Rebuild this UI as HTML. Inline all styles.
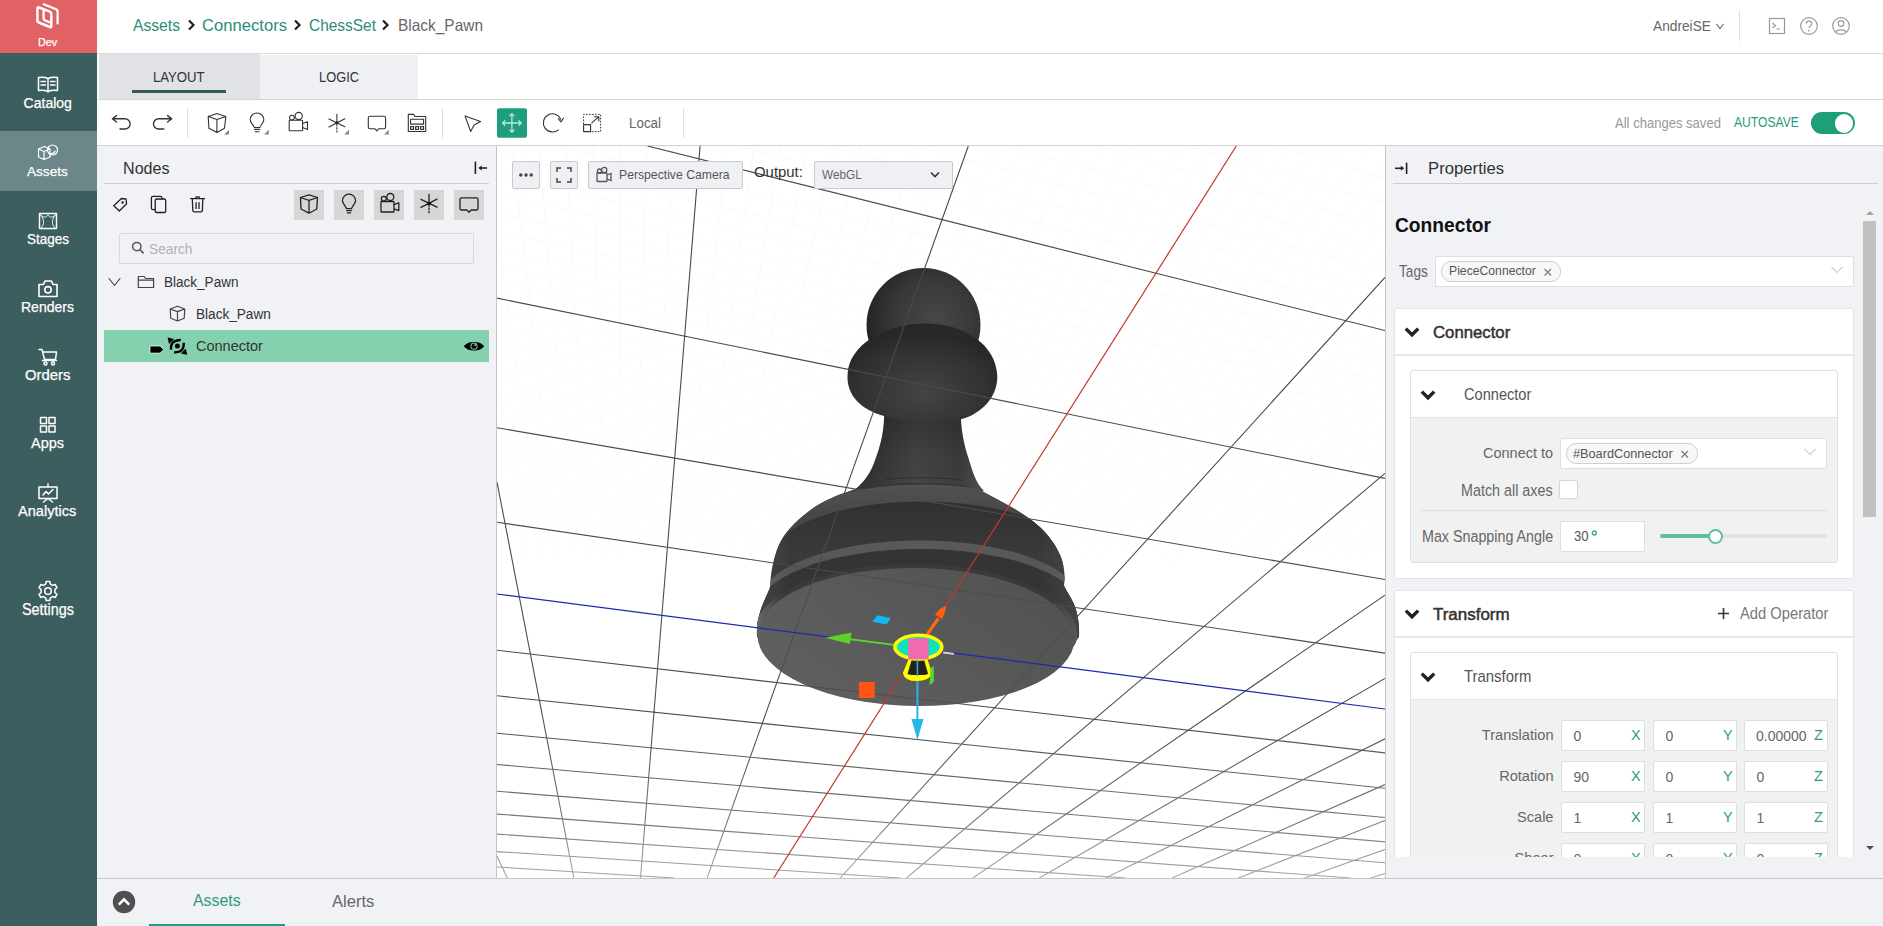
<!DOCTYPE html>
<html><head><meta charset="utf-8"><title>Editor</title>
<style>
*{box-sizing:border-box}
html,body{margin:0;padding:0}
body{width:1883px;height:926px;overflow:hidden;position:relative;background:#fff;font-family:"Liberation Sans",sans-serif;color:#333}
.a{position:absolute}
.t{position:absolute;white-space:nowrap;line-height:1}
svg{position:absolute;overflow:visible}
.sb{left:0;width:97px;text-align:center;color:#fff;font-size:14px}
.ic{fill:none;stroke:#333;stroke-width:1.3;stroke-linecap:round;stroke-linejoin:round}
.wi{fill:none;stroke:#fff;stroke-width:1.4;stroke-linecap:round;stroke-linejoin:round}
</style></head><body>
<div class="a" style="left:0;top:0;width:97px;height:926px;background:#3d5e5e"></div>
<div class="a" style="left:0;top:0;width:97px;height:53px;background:#e06264"></div>
<div class="a" style="left:0;top:131px;width:97px;height:60px;background:#6b8787"></div>
<!-- dev logo -->
<svg style="left:32px;top:0px" width="30" height="32" viewBox="32 0 30 32"><g fill="none" stroke="#fff" stroke-linejoin="round" stroke-linecap="round">
<path d="M37.4 8.6 Q37.4 6.9 39 7.5 L49.8 11.6 Q51.3 12.2 51.3 13.8 L51.3 26.2 Q51.3 27.6 49.9 27 L38.8 22.5 Q37.4 21.9 37.4 20.4 Z" stroke-width="2.5"/>
<path d="M43.6 9.6 L43.6 18.6 Q43.6 19.9 44.9 20.4 L51 22.8" stroke-width="2.3"/>
<path d="M43.6 4.3 L56.2 9.2 Q57.6 9.8 57.6 11.3 L57.6 23.6" stroke-width="2.2"/>
</g></svg>
<!-- catalog -->
<svg style="left:37px;top:76px" width="22" height="18" viewBox="0 0 22 18"><g class="wi" style="stroke-width:1.5">
<path d="M1.5 1.5 C4 1 8 1 11 2.5 C14 1 18 1 20.5 1.5 L20.5 14.5 C18 14 14 14 11 15.5 C8 14 4 14 1.5 14.5 Z"/>
<path d="M11 2.5 L11 16"/>
<path d="M4 5.5 L8.5 5.5 M4 9 L8.5 9 M13.5 5.5 L18 5.5 M13.5 9 L18 9"/>
</g></svg>
<!-- assets -->
<svg style="left:37px;top:144px" width="22" height="17" viewBox="0 0 22 17"><g class="wi" style="stroke-width:1.2">
<path d="M1.5 5 L7.5 2.5 L13 5 L13 13 L7 15.5 L1.5 13 Z M1.5 5 L7 7.5 L13 5 M7 7.5 L7 15.5"/>
<circle cx="15.5" cy="6" r="5"/>
<path d="M13.5 9.5 C15.5 9.8 17.5 8.5 18 7"/>
</g></svg>
<!-- stages -->
<svg style="left:38px;top:212px" width="20" height="18" viewBox="0 0 20 18"><g class="wi" style="stroke-width:1.5">
<rect x="1.5" y="1.5" width="17" height="15"/>
</g><g class="wi" style="stroke-width:0.9"><path d="M2.5 2.5 C4.5 6 8 6 10 3 C12 6 15.5 6 17.5 2.5 M2.8 3 C6.5 8 6.5 12 3.2 16 M17.2 3 C13.5 8 13.5 12 16.8 16"/></g></svg>
<!-- renders -->
<svg style="left:37px;top:279px" width="22" height="19" viewBox="0 0 22 19"><g class="wi" style="stroke-width:1.6">
<path d="M2 5.5 L6.5 5.5 L8 2 L14.5 2 L16 5.5 L20 5.5 L20 17.5 L2 17.5 Z"/>
<circle cx="11" cy="10.8" r="3.2"/>
</g></svg>
<!-- orders -->
<svg style="left:38px;top:348px" width="20" height="18" viewBox="0 0 20 18"><g class="wi" style="stroke-width:1.5">
<path d="M1 1.5 L4 1.5 L6.5 11.5 L17.5 11.5 L18.5 4 L5 4"/>
<path d="M4.5 12.5 L18.5 12.5"/>
<circle cx="7.5" cy="15.5" r="1.5"/><circle cx="15" cy="15.5" r="1.5"/>
</g></svg>
<!-- apps -->
<svg style="left:38px;top:416px" width="20" height="19" viewBox="0 0 20 19"><g class="wi" style="stroke-width:1.5">
<rect x="2.5" y="1.5" width="6" height="6"/><rect x="11" y="1.5" width="6" height="6"/>
<rect x="2.5" y="10" width="6" height="6"/><rect x="11" y="10" width="6" height="6"/>
</g></svg>
<!-- analytics -->
<svg style="left:37px;top:483px" width="22" height="21" viewBox="0 0 22 21"><g class="wi" style="stroke-width:1.5">
<path d="M11 1 L11 4"/><rect x="2" y="4" width="18" height="11.5"/>
<path d="M6 12 L9 8.5 L11.5 11 L16 6.5"/>
<path d="M11 15.5 L6.5 19 M11 15.5 L15.5 19"/>
</g></svg>
<!-- settings -->
<svg style="left:37px;top:580px" width="22" height="22" viewBox="0 0 22 22"><g class="wi" style="stroke-width:1.5">
<path d="M9.2 1.5 L12.8 1.5 L13.4 4.2 L15.6 5.4 L18.2 4.5 L20 7.6 L17.9 9.5 L17.9 12.5 L20 14.4 L18.2 17.5 L15.6 16.6 L13.4 17.8 L12.8 20.5 L9.2 20.5 L8.6 17.8 L6.4 16.6 L3.8 17.5 L2 14.4 L4.1 12.5 L4.1 9.5 L2 7.6 L3.8 4.5 L6.4 5.4 L8.6 4.2 Z"/>
<circle cx="11" cy="11" r="3.3"/>
</g></svg>
<!-- header breadcrumb -->
<svg style="left:187px;top:19px" width="9" height="12" viewBox="0 0 9 12"><path d="M2 1.5 L6.5 6 L2 10.5" fill="none" stroke="#222" stroke-width="2.2"/></svg>
<svg style="left:293px;top:19px" width="9" height="12" viewBox="0 0 9 12"><path d="M2 1.5 L6.5 6 L2 10.5" fill="none" stroke="#222" stroke-width="2.2"/></svg>
<svg style="left:381px;top:19px" width="9" height="12" viewBox="0 0 9 12"><path d="M2 1.5 L6.5 6 L2 10.5" fill="none" stroke="#222" stroke-width="2.2"/></svg>
<svg style="left:1715px;top:22px" width="10" height="9" viewBox="0 0 10 9"><path d="M1.5 2 L5 6.5 L8.5 2" fill="none" stroke="#666" stroke-width="1.1"/></svg>
<div class="a" style="left:1739px;top:11px;width:1px;height:30px;background:#ddd"></div>
<svg style="left:1767px;top:16px" width="20" height="20" viewBox="0 0 20 20"><g fill="none" stroke="#999" stroke-width="1.2"><rect x="2.5" y="2.5" width="15" height="15"/><path d="M5.5 7 L8.5 9.5 L5.5 12 M9.5 13 L13 13"/></g></svg>
<svg style="left:1799px;top:16px" width="20" height="20" viewBox="0 0 20 20"><g fill="none" stroke="#999" stroke-width="1.2"><circle cx="10" cy="10" r="8.3"/><path d="M7.3 7.6 C7.3 4.3 12.8 4.3 12.8 7.6 C12.8 9.6 10 9.8 10 12"/></g><circle cx="10" cy="14.6" r="0.9" fill="#999"/></svg>
<svg style="left:1831px;top:16px" width="20" height="20" viewBox="0 0 20 20"><g fill="none" stroke="#999" stroke-width="1.2"><circle cx="10" cy="10" r="8.3"/><circle cx="10" cy="7.5" r="2.8"/><path d="M4.5 16.2 C6 13 14 13 15.5 16.2"/></g></svg>
<!-- tabs -->
<div class="a" style="left:97px;top:53px;width:1786px;height:1px;background:#dcdcdc"></div>
<div class="a" style="left:99px;top:54px;width:161px;height:45px;background:#e1e2e5"></div>
<div class="a" style="left:260px;top:55px;width:158px;height:44px;background:#eff0f3"></div>
<div class="a" style="left:97px;top:99px;width:1786px;height:1px;background:#d6d6d6"></div>
<div class="a" style="left:132px;top:90px;width:94px;height:2.5px;background:#355a5a"></div>
<!-- toolbar -->
<div class="a" style="left:97px;top:145px;width:1786px;height:1px;background:#d0d0d0"></div>
<svg style="left:105px;top:105px" width="80" height="35" viewBox="105 105 80 35"><g class="ic" style="stroke-width:1.4">
<path d="M116.5 115.6 L112.4 118.8 L116.5 122 M112.6 118.8 L125 118.8 A5.1 5.1 0 0 1 125 129 L120 129"/>
<path d="M167.6 115.6 L171.7 118.8 L167.6 122 M171.5 118.8 L158.6 118.8 A5.1 5.1 0 0 0 158.6 129 L163.8 129"/>
</g></svg>
<div class="a" style="left:187px;top:108px;width:1px;height:30px;background:#ddd"></div>
<svg style="left:200px;top:105px" width="240" height="35" viewBox="200 105 240 35"><g class="ic" style="stroke-width:1.1">
<path d="M208.2 116.5 L216.9 113.6 L225.8 116.6 L216.9 119.5 Z M208.2 116.5 L208.9 128.3 L216.9 132.4 L224.5 128.3 L225.8 116.6 M216.9 119.5 L216.9 132.4"/>
<path d="M254.4 127.6 C252 123 250.2 122 250.2 119.8 A6.8 6.8 0 0 1 263.8 119.8 C263.8 122 262 123 259.8 127.6 Z M254.5 129.5 L259.7 129.5 M255.2 131.8 L259 131.8"/>
<rect x="289.2" y="120.3" width="13.4" height="10.5" rx="0.6"/><circle cx="291.9" cy="117.6" r="2.4"/><circle cx="298.7" cy="116" r="3.6"/>
<path d="M302.6 123.5 L307.5 121.7 L307.5 129.5 L302.6 127.6"/>
<path d="M336.9 114.2 L336.9 122.8 M328.9 119 L344.9 126.7 M344.9 118.7 L328.9 127"/>
<path d="M336.9 124.5 L336.9 132" stroke-dasharray="1.5 1.6"/>
<path d="M370 116.3 L384 116.3 Q385.6 116.3 385.6 118 L385.6 127 Q385.6 128.7 384 128.7 L379 128.7 L376.9 130.8 L374.8 128.7 L370 128.7 Q368.3 128.7 368.3 127 L368.3 118 Q368.3 116.3 370 116.3 Z"/>
<path d="M408.3 131.5 L408.3 114.4 L413.7 114.4 L415 116.5 L425.7 116.5 L425.7 131.5 Z"/>
<rect x="410.6" y="119.3" width="13" height="4.8"/><rect x="410.6" y="126.6" width="3" height="2.8"/><rect x="415.6" y="126.6" width="3" height="2.8"/><rect x="420.6" y="126.6" width="3" height="2.8"/>
</g>
<circle cx="336.9" cy="122.8" r="1.5" fill="#222"/>
<g fill="#888"><path d="M224.2 134.6 L229 134.6 L229 129.8 Z M264 134.6 L268.8 134.6 L268.8 129.8 Z M344.2 134.6 L349 134.6 L349 129.8 Z M384 134.6 L388.8 134.6 L388.8 129.8 Z"/></g>
</svg>
<div class="a" style="left:442px;top:108px;width:1px;height:30px;background:#ddd"></div>
<svg style="left:455px;top:105px" width="160" height="35" viewBox="455 105 160 35">
<path class="ic" style="stroke-width:1.1" d="M465 115.9 L480.5 121.6 L474.1 125 L470.7 131.5 Z"/>
<rect x="497" y="108.2" width="30" height="29.5" rx="2" fill="#1f9e7e"/>
<g fill="none" stroke="#b5ead7" stroke-width="1.3" stroke-linecap="round" stroke-linejoin="round">
<path d="M502.6 123 L521.2 123 M511.9 113.7 L511.9 132.3 M504.8 120.8 L502.6 123 L504.8 125.2 M519 120.8 L521.2 123 L519 125.2 M509.7 115.9 L511.9 113.7 L514.1 115.9 M509.7 130.1 L511.9 132.3 L514.1 130.1"/>
</g>
<g class="ic" style="stroke-width:1.1">
<path d="M560.8 119.2 A9.1 9.1 0 1 0 558.4 129.8"/>
<path d="M558.2 118.6 L561 121.8 L563.6 118"/>
<rect x="583.6" y="124.6" width="7" height="7"/>
<path d="M591.8 122.8 L598.6 116.9 M594.5 116.8 L598.8 116.8 L598.8 121"/>
</g>
<path d="M583.6 124 L583.6 114.4 L600.6 114.4 L600.6 131.6 L591 131.6" fill="none" stroke="#333" stroke-width="1" stroke-dasharray="1.6 1.4"/>
</svg>
<div class="a" style="left:683px;top:108px;width:1px;height:30px;background:#ddd"></div>
<div class="a" style="left:1811px;top:112px;width:44px;height:22px;border-radius:11px;background:#1f9e7a"></div>
<div class="a" style="left:1834.5px;top:114.2px;width:18.5px;height:18.5px;border-radius:50%;background:#fff"></div>
<!-- left panel -->
<div class="a" style="left:97px;top:146px;width:400px;height:732px;background:#f0f2f5"></div>
<div class="a" style="left:496px;top:146px;width:1px;height:732px;background:#c4c4c4"></div>
<svg style="left:470px;top:155px" width="25" height="25" viewBox="470 155 25 25"><g stroke="#222" fill="none"><path d="M475.4 161.6 L475.4 174" stroke-width="1.6"/><path d="M479.5 168 L487 168" stroke-width="1.6"/></g><path d="M478.4 168 L481.6 165.6 L481.6 170.4 Z" fill="#222"/></svg>
<div class="a" style="left:104px;top:183px;width:385px;height:1px;background:#cfcfcf"></div>
<svg style="left:105px;top:190px" width="110" height="30" viewBox="105 190 110 30"><g class="ic" style="stroke-width:1.3;stroke:#222">
<path d="M113.8 205.7 L121.4 198.5 L126 199 L126.6 203.7 L119.3 211 Z"/>
<circle cx="122.6" cy="202.4" r="0.6"/>
<path d="M162 199 L162 198 Q162 196.4 160.4 196.4 L153 196.4 Q151.4 196.4 151.4 198 L151.4 208 Q151.4 209.6 153 209.6 L155.2 209.6"/>
<rect x="155.2" y="199" width="10.5" height="13.5" rx="1.6"/>
<path d="M190.6 198.6 L204.6 198.6 M195.5 198.6 L196 196.8 L199 196.8 L199.6 198.6 M192.3 198.6 L192.8 210.4 Q192.9 211.9 194.4 211.9 L200.8 211.9 Q202.3 211.9 202.4 210.4 L202.8 198.6 M196.1 202.6 L196.1 208.4 M199 202.6 L199 208.4"/>
</g></svg>
<div class="a" style="left:294px;top:190px;width:30px;height:30px;background:#d6d6d6"></div>
<div class="a" style="left:334px;top:190px;width:30px;height:30px;background:#d6d6d6"></div>
<div class="a" style="left:374px;top:190px;width:30px;height:30px;background:#d6d6d6"></div>
<div class="a" style="left:414px;top:190px;width:30px;height:30px;background:#d6d6d6"></div>
<div class="a" style="left:454px;top:190px;width:30px;height:30px;background:#d6d6d6"></div>
<svg style="left:290px;top:186px" width="200" height="38" viewBox="290 186 200 38"><g class="ic" style="stroke-width:1.3;stroke:#222">
<path d="M300.5 197.5 L309 194.8 L317.5 197.5 L309 200.3 Z M300.5 197.5 L301 209 L309 213.2 L316.8 209 L317.5 197.5 M309 200.3 L309 213.2"/>
<path d="M346.6 208.6 C344.2 204 342.4 203 342.4 200.8 A6.6 6.6 0 0 1 355.6 200.8 C355.6 203 353.8 204 351.4 208.6 Z M346.7 210.6 L351.3 210.6 M347.4 212.8 L350.6 212.8"/>
<rect x="381" y="201.5" width="13" height="10.5" rx="0.6"/><circle cx="383.8" cy="198.8" r="2.4"/><circle cx="390.3" cy="197" r="3.5"/>
<path d="M394 204.6 L398.8 202.8 L398.8 210.6 L394 208.8"/>
<path d="M429 194.5 L429 203.2 M421 199.4 L437 207.2 M437 199.2 L421 207.4"/>
<path d="M429 205 L429 213" stroke-dasharray="1.5 1.6"/>
<path d="M461.6 197.8 L476.4 197.8 Q478 197.8 478 199.4 L478 208.4 Q478 210 476.4 210 L471.2 210 L469 212.2 L466.8 210 L461.6 210 Q460 210 460 208.4 L460 199.4 Q460 197.8 461.6 197.8 Z"/>
</g><circle cx="429" cy="203.2" r="1.5" fill="#111"/></svg>
<div class="a" style="left:119px;top:233px;width:355px;height:31px;border:1px solid #d9d9d9;border-radius:2px;background:#f0f2f5"></div>
<svg style="left:128px;top:238px" width="20" height="20" viewBox="128 238 20 20"><g fill="none" stroke="#555" stroke-width="1.5"><circle cx="136.8" cy="246.6" r="4.2"/><path d="M139.8 249.6 L143.6 253.4"/></g></svg>
<!-- tree -->
<svg style="left:105px;top:270px" width="90" height="90" viewBox="105 270 90 90"><g class="ic" style="stroke-width:1.2;stroke:#444">
<path d="M109 278.5 L114.5 285.5 L120 278.5"/>
<path d="M138.3 287.5 L138.3 276.5 L144.2 276.5 L145.6 278.5 L153.6 278.5 L153.6 287.5 Z M138.3 280.2 L153.6 280.2"/>
<path d="M170.2 309 L177.5 306.2 L184.8 309 L177.5 311.6 Z M170.2 309 L170.8 318.2 L177.5 321 L184.2 318.2 L184.8 309 M177.5 311.6 L177.5 321"/>
</g></svg>
<div class="a" style="left:104px;top:330px;width:385px;height:32px;background:#85d0ae"></div>
<svg style="left:145px;top:334px" width="50" height="25" viewBox="145 334 50 25">
<path d="M149.9 345.9 L160.1 345.9 L163.9 349.5 L160.1 353.2 L149.9 353.2 Z" fill="#000" stroke="#e8fff4" stroke-width="0.9"/>
<g fill="none" stroke="#000" stroke-width="2.4"><path d="M171 349.6 C170.6 344 172.5 340.2 180.8 340"/><path d="M174 352.4 C181.5 352.6 184 349 183.8 342.8"/></g>
<path d="M167.6 337.6 L174 339 L169 344 Z M187.2 354.8 L180.8 353.4 L185.8 348.4 Z" fill="#000"/>
<circle cx="177.4" cy="346.1" r="2.5" fill="#000"/>
</svg>
<svg style="left:460px;top:336px" width="28" height="20" viewBox="460 336 28 20">
<path d="M464 346.2 C467 340.5 481 340.5 484 346.2 C481 351.9 467 351.9 464 346.2 Z" fill="#000"/>
<circle cx="474" cy="346.2" r="3.6" fill="#85d0ae"/><circle cx="474" cy="346.2" r="2.6" fill="#000"/><circle cx="475.2" cy="345" r="0.9" fill="#85d0ae"/>
</svg>
<!-- viewport -->
<svg style="left:497px;top:146px;overflow:hidden" width="888" height="732" viewBox="497 146 888 732">
<defs>
<linearGradient id="lg" gradientUnits="userSpaceOnUse" x1="0" y1="146" x2="0" y2="878"><stop offset="0" stop-color="#464646"/><stop offset="0.78" stop-color="#4e4e4e"/><stop offset="0.92" stop-color="#777"/><stop offset="1" stop-color="#a8a8a8"/></linearGradient>
<linearGradient id="lgFine" gradientUnits="userSpaceOnUse" x1="0" y1="146" x2="0" y2="878"><stop offset="0" stop-color="#f9f9f9"/><stop offset="0.4" stop-color="#fbfbfb"/><stop offset="0.6" stop-color="#fff"/></linearGradient>
<linearGradient id="gNeckV" x1="0" y1="0" x2="0" y2="1"><stop offset="0" stop-color="#000" stop-opacity="0.25"/><stop offset="0.6" stop-color="#000" stop-opacity="0"/><stop offset="1" stop-color="#fff" stop-opacity="0.04"/></linearGradient>
<radialGradient id="gHead" cx="0.6" cy="0.45" r="0.6"><stop offset="0" stop-color="#474747"/><stop offset="0.6" stop-color="#383838"/><stop offset="1" stop-color="#242424"/></radialGradient>
<radialGradient id="gCollar" cx="0.5" cy="0.7" r="0.6"><stop offset="0" stop-color="#444"/><stop offset="0.7" stop-color="#323232"/><stop offset="1" stop-color="#282828"/></radialGradient>
<linearGradient id="gNeck" x1="0" y1="0" x2="1" y2="0"><stop offset="0" stop-color="#2a2a2a"/><stop offset="0.5" stop-color="#434343"/><stop offset="0.8" stop-color="#3a3a3a"/><stop offset="1" stop-color="#484848"/></linearGradient>
<linearGradient id="gBody" x1="0" y1="0" x2="1" y2="0"><stop offset="0" stop-color="#3a3a3a"/><stop offset="0.15" stop-color="#333"/><stop offset="0.5" stop-color="#383838"/><stop offset="0.85" stop-color="#333"/><stop offset="1" stop-color="#454545"/></linearGradient>
<linearGradient id="gFace" x1="0" y1="0.8" x2="1" y2="0.2"><stop offset="0" stop-color="#606060"/><stop offset="1" stop-color="#525252"/></linearGradient>
</defs>
<rect x="497" y="146" width="888" height="732" fill="#fff"/>
<path d="M1365.7 146.0L1385.0 151.9M1276.0 146.0L1385.0 178.6M1186.2 146.0L1385.0 203.8M1096.5 146.0L1385.0 227.6M1006.7 146.0L1385.0 250.3M917.0 146.0L1385.0 271.9M827.2 146.0L1385.0 292.4M497.0 870.8L500.6 878.0M737.4 146.0L1385.0 311.9M497.0 839.8L513.9 878.0M557.7 146.0L1385.0 348.3M497.0 821.1L520.6 878.0M497.0 153.0L1385.0 365.3M497.0 799.9L527.3 878.0M497.0 173.9L1385.0 381.6M497.0 775.3L533.9 878.0M497.0 193.8L1385.0 397.2M497.0 746.8L540.6 878.0M497.0 213.0L1385.0 412.1M497.0 713.0L547.3 878.0M497.0 231.4L1385.0 426.4M497.0 672.5L553.9 878.0M497.0 249.1L1385.0 440.2M497.0 623.0L560.6 878.0M497.0 266.0L1385.0 453.4M497.0 561.3L567.3 878.0M497.0 282.3L1385.0 466.1M497.0 376.6L580.6 878.0M497.0 313.2L1385.0 490.2M497.0 229.3L587.2 878.0M497.0 327.8L1385.0 501.5M512.3 146.0L593.9 878.0M497.0 341.8L1385.0 512.5M539.1 146.0L600.6 878.0M497.0 355.4L1385.0 523.1M565.9 146.0L607.2 878.0M497.0 368.5L1385.0 533.3M592.8 146.0L613.9 878.0M497.0 381.2L1385.0 543.2M619.6 146.0L620.6 878.0M497.0 393.4L1385.0 552.7M646.4 146.0L627.2 878.0M497.0 405.3L1385.0 561.9M673.3 146.0L633.9 878.0M497.0 416.7L1385.0 570.9M726.9 146.0L647.2 878.0M497.0 438.6L1385.0 587.9M753.8 146.0L653.9 878.0M497.0 449.0L1385.0 596.0M780.6 146.0L660.5 878.0M497.0 459.1L1385.0 603.9M807.4 146.0L667.2 878.0M497.0 469.0L1385.0 611.6M834.2 146.0L673.8 878.0M497.0 478.5L1385.0 619.0M861.0 146.0L680.5 878.0M497.0 487.7L1385.0 626.2M887.9 146.0L687.1 878.0M497.0 496.7L1385.0 633.2M914.7 146.0L693.8 878.0M497.0 505.5L1385.0 640.0M941.5 146.0L700.5 878.0M497.0 514.0L1385.0 646.6M995.1 146.0L713.8 878.0M497.0 530.3L1385.0 659.4M1021.9 146.0L720.4 878.0M497.0 538.1L1385.0 665.5M1048.7 146.0L727.1 878.0M497.0 545.7L1385.0 671.4M1075.5 146.0L733.7 878.0M497.0 553.1L1385.0 677.2M1102.3 146.0L740.4 878.0M497.0 560.4L1385.0 682.8M1129.2 146.0L747.0 878.0M497.0 567.4L1385.0 688.3M1156.0 146.0L753.7 878.0M497.0 574.3L1385.0 693.7M1182.8 146.0L760.4 878.0M497.0 581.0L1385.0 698.9M1209.6 146.0L767.0 878.0M497.0 587.6L1385.0 704.0M1263.1 146.0L780.3 878.0M497.0 600.2L1385.0 713.8M1289.9 146.0L787.0 878.0M497.0 606.3L1385.0 718.6M1316.7 146.0L793.6 878.0M497.0 612.2L1385.0 723.2M1343.5 146.0L800.3 878.0M497.0 618.0L1385.0 727.8M1370.3 146.0L806.9 878.0M497.0 623.7L1385.0 732.2M1385.0 161.2L813.6 878.0M497.0 629.3L1385.0 736.5M1385.0 193.1L820.2 878.0M497.0 634.7L1385.0 740.8M1385.0 223.0L826.9 878.0M497.0 640.0L1385.0 744.9M1385.0 251.1L833.5 878.0M497.0 645.2L1385.0 748.9M1385.0 302.2L846.8 878.0M497.0 655.3L1385.0 756.8M1385.0 325.6L853.4 878.0M497.0 660.2L1385.0 760.6M1385.0 347.6L860.1 878.0M497.0 664.9L1385.0 764.3M1385.0 368.5L866.7 878.0M497.0 669.6L1385.0 767.9M1385.0 388.3L873.4 878.0M497.0 674.2L1385.0 771.5M1385.0 407.0L880.0 878.0M497.0 678.7L1385.0 775.0M1385.0 424.8L886.7 878.0M497.0 683.1L1385.0 778.4M1385.0 441.8L893.3 878.0M497.0 687.4L1385.0 781.8M1385.0 457.9L900.0 878.0M497.0 691.6L1385.0 785.1M1385.0 488.0L913.2 878.0M497.0 699.8L1385.0 791.5M1385.0 502.0L919.9 878.0M497.0 703.8L1385.0 794.6M1385.0 515.5L926.5 878.0M497.0 707.7L1385.0 797.7M1385.0 528.3L933.2 878.0M497.0 711.6L1385.0 800.6M1385.0 540.6L939.8 878.0M497.0 715.3L1385.0 803.6M1385.0 552.4L946.5 878.0M497.0 719.0L1385.0 806.5M1385.0 563.8L953.1 878.0M497.0 722.7L1385.0 809.3M1385.0 574.7L959.7 878.0M497.0 726.2L1385.0 812.1M1385.0 585.1L966.4 878.0M497.0 729.7L1385.0 814.8M1385.0 604.9L979.7 878.0M497.0 736.6L1385.0 820.1M1385.0 614.3L986.3 878.0M497.0 739.9L1385.0 822.7M1385.0 623.3L992.9 878.0M497.0 743.2L1385.0 825.3M1385.0 632.0L999.6 878.0M497.0 746.4L1385.0 827.8M1385.0 640.4L1006.2 878.0M497.0 749.5L1385.0 830.2M1385.0 648.5L1012.8 878.0M497.0 752.6L1385.0 832.6M1385.0 656.4L1019.5 878.0M497.0 755.7L1385.0 835.0M1385.0 663.9L1026.1 878.0M497.0 758.7L1385.0 837.4M1385.0 671.3L1032.8 878.0M497.0 761.6L1385.0 839.7M1385.0 685.3L1046.0 878.0M497.0 767.4L1385.0 844.2M1385.0 692.0L1052.7 878.0M497.0 770.2L1385.0 846.3M1385.0 698.4L1059.3 878.0M497.0 773.0L1385.0 848.5M1385.0 704.7L1065.9 878.0M497.0 775.7L1385.0 850.6M1385.0 710.8L1072.6 878.0M497.0 778.4L1385.0 852.7M1385.0 716.7L1079.2 878.0M497.0 781.0L1385.0 854.8M1385.0 722.5L1085.8 878.0M497.0 783.6L1385.0 856.8M1385.0 728.1L1092.5 878.0M497.0 786.2L1385.0 858.8M1385.0 733.5L1099.1 878.0M497.0 788.7L1385.0 860.8M1385.0 743.9L1112.4 878.0M497.0 793.6L1385.0 864.6M1385.0 748.9L1119.0 878.0M497.0 796.0L1385.0 866.5M1385.0 753.8L1125.6 878.0M497.0 798.4L1385.0 868.3M1385.0 758.5L1132.2 878.0M497.0 800.8L1385.0 870.2M1385.0 763.2L1138.9 878.0M497.0 803.1L1385.0 872.0M1385.0 767.7L1145.5 878.0M497.0 805.3L1385.0 873.7M1385.0 772.0L1152.1 878.0M497.0 807.6L1385.0 875.5M1385.0 776.3L1158.8 878.0M497.0 809.8L1385.0 877.2M1385.0 780.5L1165.4 878.0M497.0 812.0L1373.1 878.0M1385.0 788.6L1178.6 878.0M497.0 816.2L1328.1 878.0M1385.0 792.5L1185.3 878.0M497.0 818.3L1305.7 878.0M1385.0 796.3L1191.9 878.0M497.0 820.4L1283.2 878.0M1385.0 800.0L1198.5 878.0M497.0 822.4L1260.7 878.0M1385.0 803.6L1205.1 878.0M497.0 824.4L1238.2 878.0M1385.0 807.1L1211.8 878.0M497.0 826.4L1215.8 878.0M1385.0 810.6L1218.4 878.0M497.0 828.4L1193.3 878.0M1385.0 814.0L1225.0 878.0M497.0 830.3L1170.8 878.0M1385.0 817.3L1231.6 878.0M497.0 832.2L1148.3 878.0M1385.0 823.7L1244.9 878.0M497.0 835.9L1103.3 878.0M1385.0 826.8L1251.5 878.0M497.0 837.7L1080.7 878.0M1385.0 829.9L1258.1 878.0M497.0 839.5L1058.2 878.0M1385.0 832.9L1264.7 878.0M497.0 841.3L1035.7 878.0M1385.0 835.8L1271.4 878.0M497.0 843.1L1013.2 878.0M1385.0 838.6L1278.0 878.0M497.0 844.8L990.6 878.0M1385.0 841.4L1284.6 878.0M497.0 846.5L968.1 878.0M1385.0 844.2L1291.2 878.0M497.0 848.2L945.5 878.0M1385.0 846.9L1297.8 878.0M497.0 849.9L923.0 878.0M1385.0 852.1L1311.1 878.0M497.0 853.2L877.9 878.0M1385.0 854.7L1317.7 878.0M497.0 854.8L855.3 878.0M1385.0 857.1L1324.3 878.0M497.0 856.4L832.7 878.0M1385.0 859.6L1330.9 878.0M497.0 858.0L810.2 878.0M1385.0 862.0L1337.6 878.0M497.0 859.5L787.6 878.0M1385.0 864.4L1344.2 878.0M497.0 861.1L765.0 878.0M1385.0 866.7L1350.8 878.0M497.0 862.6L742.4 878.0M1385.0 868.9L1357.4 878.0M497.0 864.1L719.8 878.0M1385.0 871.2L1364.0 878.0M497.0 865.6L697.2 878.0M1385.0 875.5L1377.2 878.0M497.0 868.5L652.0 878.0M1385.0 877.6L1383.9 878.0M497.0 869.9L629.4 878.0M497.0 871.3L606.8 878.0M497.0 872.7L584.2 878.0M497.0 874.1L561.6 878.0M497.0 875.5L538.9 878.0M497.0 876.9L516.3 878.0" fill="none" stroke="url(#lgFine)" stroke-width="1"/>
<!-- pawn -->
<defs>
<clipPath id="cpBody"><path d="M858.5 488 C840 494 821 501 808 512 C795 522 785 532 779 545 C774 556 771 570 770.5 582 L769.8 588.6 C767 595 762 605 759.4 614.5 C757 622 756.5 630 757 637 L770 650 L920 670 L1066 655 L1079 637 C1079.5 628 1078.5 618 1076 610 C1074 602 1068 594 1063.7 585.3 C1065.5 578 1064.5 566 1060.5 556 C1055 543 1045 530 1030 519 C1015 508 998 500 979.4 489.7 C960 481 890 481 858.5 488 Z"/></clipPath>
<linearGradient id="gEdge" x1="0" y1="0" x2="1" y2="0"><stop offset="0" stop-color="#fff" stop-opacity="0.10"/><stop offset="0.12" stop-color="#fff" stop-opacity="0"/><stop offset="0.85" stop-color="#fff" stop-opacity="0"/><stop offset="1" stop-color="#fff" stop-opacity="0.10"/></linearGradient>
<linearGradient id="gRidge1" x1="0" y1="0" x2="0" y2="1"><stop offset="0" stop-color="#525252"/><stop offset="0.3" stop-color="#474747"/><stop offset="1" stop-color="#3c3c3c"/></linearGradient>
<linearGradient id="gDark1" x1="0" y1="0" x2="0" y2="1"><stop offset="0" stop-color="#303030"/><stop offset="0.5" stop-color="#3a3a3a"/><stop offset="1" stop-color="#353535"/></linearGradient>
<linearGradient id="gRidge2" x1="0" y1="0" x2="0" y2="1"><stop offset="0" stop-color="#5a5a5a"/><stop offset="1" stop-color="#474747"/></linearGradient>
<linearGradient id="gRim" x1="0" y1="0" x2="1" y2="0"><stop offset="0" stop-color="#6e6e6e"/><stop offset="0.08" stop-color="#3a3a3a"/><stop offset="0.92" stop-color="#3a3a3a"/><stop offset="1" stop-color="#5a5a5a"/></linearGradient>
</defs>
<g>
<circle cx="923.5" cy="325" r="57" fill="url(#gHead)"/>
<path d="M884 408 C885 428 881 445 874 463 C869 476 862 484 852 492 L984 491 C977 484 974 476 970 463 C964 445 960 428 961 408 Z" fill="url(#gNeck)"/>
<path d="M884 408 C885 428 881 445 874 463 C869 476 862 484 852 492 L984 491 C977 484 974 476 970 463 C964 445 960 428 961 408 Z" fill="url(#gNeckV)"/>
<path d="M847.6 374 C849 345 885 323.5 924.7 323.5 C965 323.5 996 345 997.3 375.4 C998 398 980 414 962 419 C940 424 905 423 884 416 C862 410 846 396 847.6 374 Z" fill="url(#gCollar)"/>
<g clip-path="url(#cpBody)">
<rect x="750" y="470" width="340" height="250" fill="#353535"/>
<ellipse cx="922" cy="537" rx="142" ry="52.5" fill="url(#gRidge1)"/>
<ellipse cx="922" cy="554" rx="146" ry="52.5" fill="url(#gDark1)"/>
<ellipse cx="920" cy="604" rx="162" ry="63.5" fill="url(#gRidge2)"/>
<ellipse cx="920" cy="613.5" rx="165" ry="64.5" fill="#343434"/>
<rect x="750" y="470" width="340" height="250" fill="url(#gEdge)"/>
</g>
<path d="M884 480 C900 477 945 477 962 480" fill="none" stroke="#2e2e2e" stroke-width="1.2"/>
<ellipse cx="916" cy="633" rx="161" ry="69" transform="rotate(0.8 916 637)" fill="url(#gRim)" clip-path="url(#cpBody)"/>
<ellipse cx="916" cy="637" rx="158.5" ry="69" transform="rotate(0.8 916 637)" fill="url(#gFace)"/>
</g>
<!-- grid -->
<path d="M497.0 856.2L507.3 878.0M497.0 482.0L573.9 878.0M700.1 146.0L640.5 878.0M968.3 146.0L707.1 878.0M1385.0 277.4L840.2 878.0M1385.0 473.3L906.6 878.0M1385.0 595.2L973.0 878.0M1385.0 678.4L1039.4 878.0M1385.0 738.8L1105.7 878.0M1385.0 784.6L1172.0 878.0M1385.0 820.5L1238.3 878.0M1385.0 849.5L1304.5 878.0M1385.0 873.4L1370.6 878.0M647.5 146.0L1385.0 330.5M497.0 298.1L1385.0 478.4M497.0 427.8L1385.0 579.5M497.0 522.2L1385.0 653.1M497.0 650.3L1385.0 752.9M497.0 695.8L1385.0 788.3M497.0 733.2L1385.0 817.5M497.0 764.5L1385.0 841.9M497.0 791.2L1385.0 862.7M497.0 814.1L1350.6 878.0M497.0 834.1L1125.8 878.0M497.0 851.6L900.4 878.0M497.0 867.0L674.6 878.0" fill="none" stroke="url(#lg)" stroke-width="1.1"/>
<path d="M1236.3 146.0L773.7 878.0" fill="none" stroke="#c0392b" stroke-width="1.2"/>
<path d="M497.0 594.0L1385.0 709.0" fill="none" stroke="#1e28b4" stroke-width="1.2"/>
<!-- gizmo -->
<g>
<path d="M910 647 L848 639" stroke="#5fd22a" stroke-width="2"/>
<path d="M825.3 637.7 L851.5 632.5 L850 644 Z" fill="#5fd22a"/>
<path d="M924.7 637.9 L938.3 618.5" stroke="#ff6a13" stroke-width="3.2"/>
<path d="M934.9 614.6 L940.3 608.7 L946.5 605.5 L944.6 613.6 L942.2 619 Z" fill="#ff5e0e"/>
<path d="M917.4 660 L917.4 722" stroke="#22b8ee" stroke-width="2"/>
<path d="M911.5 719 L923.5 719 L917.4 740 Z" fill="#22b8ee"/>
<path d="M943.2 652.5 L954 653.9" stroke="#d8d8d8" stroke-width="1.8"/>
<path d="M877.4 615.2 L890.8 617.9 L886.5 624.5 L872.2 621.8 Z" fill="#14b8f0"/>
<rect x="859" y="682" width="15.8" height="16" fill="#ff5511"/>
<path d="M911 658.5 L925 658.5 L930 673 C928 678 922 679 917 679 C912 679 906 678 905 673 Z" fill="#ffff00" stroke="#ffff00" stroke-width="4" stroke-linejoin="round"/>
<path d="M911.6 660.3 L924.2 660.3 L928.1 673.9 C925 675.5 910 675.5 907.5 673.9 Z" fill="#222"/>
<ellipse cx="918.4" cy="647.1" rx="23.4" ry="11.8" fill="#0fe3bb" stroke="#ffff00" stroke-width="3.6"/>
<rect x="908.2" y="638.4" width="20.4" height="21" fill="#f06ab2"/>
<path d="M917.4 660 L917.4 676" stroke="#3aa6cc" stroke-width="1.6"/>
<path d="M930.5 668 L933.9 666 L933.9 681.6 L929.6 685.5 Z" fill="#5fd22a"/>
</g>
</svg>
<!-- overlay buttons -->
<div class="a" style="left:512px;top:161px;width:28px;height:27.5px;border:1px solid #c9cacc;border-radius:2px;background:#eff0f3"></div>
<svg style="left:512px;top:161px" width="28" height="28" viewBox="0 0 28 28"><g fill="#444"><circle cx="8.8" cy="14" r="1.7"/><circle cx="14" cy="14" r="1.7"/><circle cx="19.2" cy="14" r="1.7"/></g></svg>
<div class="a" style="left:550px;top:161px;width:28px;height:27.5px;border:1px solid #c9cacc;border-radius:2px;background:#eff0f3"></div>
<svg style="left:550px;top:161px" width="28" height="28" viewBox="0 0 28 28"><path d="M7 11 L7 7 L11 7 M17 7 L21 7 L21 11 M21 17 L21 21 L17 21 M11 21 L7 21 L7 17" fill="none" stroke="#444" stroke-width="1.5"/></svg>
<div class="a" style="left:588px;top:161px;width:155px;height:27.5px;border:1px solid #c9cacc;border-radius:2px;background:#eff0f3"></div>
<svg style="left:594px;top:166px" width="20" height="18" viewBox="0 0 20 18"><g fill="none" stroke="#555" stroke-width="1.3"><rect x="3" y="7" width="10" height="8.5" rx="0.5"/><circle cx="5.4" cy="5" r="2"/><circle cx="10.2" cy="4" r="2.6"/><path d="M13 9 L17 7.5 L17 14.5 L13 13"/></g></svg>
<div class="a" style="left:813.5px;top:161px;width:139.5px;height:27.5px;border:1px solid #c9cacc;border-radius:2px;background:#eff0f3"></div>
<svg style="left:928px;top:169px" width="14" height="12" viewBox="0 0 14 12"><path d="M3 3.5 L7 7.5 L11 3.5" fill="none" stroke="#333" stroke-width="1.6"/></svg>
<!-- right panel -->
<div class="a" style="left:1385px;top:146px;width:498px;height:732px;background:#f0f2f5"></div>
<div class="a" style="left:1385px;top:146px;width:1px;height:732px;background:#c4c4c4"></div>
<svg style="left:1390px;top:158px" width="22" height="20" viewBox="1390 158 22 20"><g stroke="#222" fill="none" stroke-width="1.6"><path d="M1406.6 162.6 L1406.6 174"/><path d="M1395 168.3 L1401.5 168.3"/></g><path d="M1404.2 168.3 L1400.8 165.8 L1400.8 170.8 Z" fill="#222"/></svg>
<div class="a" style="left:1393px;top:183px;width:485px;height:1px;background:#cfcfcf"></div>
<!-- scroll content -->
<div class="a" style="left:1386px;top:190px;width:497px;height:667px;overflow:hidden">
<div class="a" style="left:-1386px;top:-190px;width:1883px;height:1100px">
<div class="a" style="left:1435px;top:255.5px;width:419px;height:31px;background:#fff;border:1px solid #dedede;border-radius:2px"></div>
<div class="a" style="left:1440.5px;top:260.8px;width:120px;height:21px;background:#f7f7f7;border:1px solid #cfcfcf;border-radius:10px"></div>
<svg style="left:1542px;top:266px" width="12" height="12" viewBox="0 0 12 12"><path d="M2.5 3 L9 9.5 M9 3 L2.5 9.5" stroke="#777" stroke-width="1.1"/></svg>
<svg style="left:1829px;top:264px" width="16" height="12" viewBox="0 0 16 12"><path d="M2.5 3 L8 8.5 L13.5 3" fill="none" stroke="#d0d0d0" stroke-width="1.1"/></svg>
<!-- connector card -->
<div class="a" style="left:1394px;top:307.5px;width:459.5px;height:271px;background:#fff;border:1px solid #e2e3e5;border-radius:3px"></div>
<div class="a" style="left:1395px;top:354px;width:457.5px;height:2px;background:#e6e7e9"></div>
<svg style="left:1402px;top:324px" width="20" height="16" viewBox="0 0 20 16"><path d="M3.8 4.6 L10 10.8 L16.2 4.6" fill="none" stroke="#222" stroke-width="3.4"/></svg>
<div class="a" style="left:1409.5px;top:370px;width:428.5px;height:192.5px;background:#f0f1f1;border:1px solid #e0e1e3;border-radius:3px"></div>
<div class="a" style="left:1410.5px;top:371px;width:426.5px;height:46.5px;background:#fff;border-bottom:1px solid #e3e4e6;border-radius:3px 3px 0 0"></div>
<svg style="left:1418px;top:387px" width="20" height="16" viewBox="0 0 20 16"><path d="M3.8 4.6 L10 10.8 L16.2 4.6" fill="none" stroke="#222" stroke-width="3.4"/></svg>
<div class="a" style="left:1560px;top:437.5px;width:267px;height:31px;background:#fff;border:1px solid #dedede;border-radius:2px"></div>
<div class="a" style="left:1565.5px;top:442.5px;width:132px;height:21px;background:#f7f7f7;border:1px solid #cfcfcf;border-radius:10px"></div>
<svg style="left:1679px;top:448px" width="12" height="12" viewBox="0 0 12 12"><path d="M2.5 3 L9 9.5 M9 3 L2.5 9.5" stroke="#777" stroke-width="1.1"/></svg>
<svg style="left:1802px;top:446px" width="16" height="12" viewBox="0 0 16 12"><path d="M2.5 3 L8 8.5 L13.5 3" fill="none" stroke="#d0d0d0" stroke-width="1.1"/></svg>
<div class="a" style="left:1558.5px;top:479.5px;width:19.5px;height:19.5px;background:#fff;border:1px solid #d5d5d5;border-radius:2px"></div>
<div class="a" style="left:1420px;top:510px;width:407px;height:1px;background:#dedede"></div>
<div class="a" style="left:1560px;top:520.5px;width:84.5px;height:31px;background:#fff;border:1px solid #dedede;border-radius:2px"></div>
<svg style="left:1589px;top:529px" width="10" height="10" viewBox="0 0 10 10"><circle cx="5.3" cy="4" r="2" fill="none" stroke="#35a88a" stroke-width="1.3"/></svg>
<div class="a" style="left:1659.5px;top:534px;width:167.5px;height:4px;background:#e2e2e2;border-radius:2px"></div>
<div class="a" style="left:1659.5px;top:534px;width:56px;height:4px;background:#5fbf9d;border-radius:2px"></div>
<div class="a" style="left:1707.5px;top:528.5px;width:15px;height:15px;background:#fff;border:2px solid #5fbf9d;border-radius:50%"></div>
<!-- transform card -->
<div class="a" style="left:1394px;top:589.5px;width:459.5px;height:400px;background:#fff;border:1px solid #e2e3e5;border-radius:3px"></div>
<div class="a" style="left:1395px;top:636px;width:457.5px;height:2px;background:#e6e7e9"></div>
<svg style="left:1402px;top:606px" width="20" height="16" viewBox="0 0 20 16"><path d="M3.8 4.6 L10 10.8 L16.2 4.6" fill="none" stroke="#222" stroke-width="3.4"/></svg>
<svg style="left:1716px;top:606px" width="15" height="15" viewBox="0 0 15 15"><path d="M7.5 2 L7.5 13 M2 7.5 L13 7.5" stroke="#333" stroke-width="1.6"/></svg>
<div class="a" style="left:1409.5px;top:652px;width:428px;height:400px;background:#f0f1f1;border:1px solid #e0e1e3;border-radius:3px"></div>
<div class="a" style="left:1410.5px;top:653px;width:426px;height:46.5px;background:#fff;border-bottom:1px solid #e3e4e6;border-radius:3px 3px 0 0"></div>
<svg style="left:1418px;top:669px" width="20" height="16" viewBox="0 0 20 16"><path d="M3.8 4.6 L10 10.8 L16.2 4.6" fill="none" stroke="#222" stroke-width="3.4"/></svg>
<div class="t" style="right:329.5px;top:727.5px;font-size:14.6px;color:#666">Translation</div>
<div class="a" style="left:1560.5px;top:719.5px;width:84px;height:31px;background:#fff;border:1px solid #dedede;border-radius:2px"></div>
<div class="t" style="left:1573.5px;top:728.5px;font-size:14px;color:#666">0</div>
<div class="t" style="left:1631.0px;top:728.0px;font-size:14.5px;color:#2e9a7c">X</div>
<div class="a" style="left:1652.5px;top:719.5px;width:84px;height:31px;background:#fff;border:1px solid #dedede;border-radius:2px"></div>
<div class="t" style="left:1665.5px;top:728.5px;font-size:14px;color:#666">0</div>
<div class="t" style="left:1723.0px;top:728.0px;font-size:14.5px;color:#2e9a7c">Y</div>
<div class="a" style="left:1743.5px;top:719.5px;width:84px;height:31px;background:#fff;border:1px solid #dedede;border-radius:2px"></div>
<div class="t" style="left:1756.0px;top:728.5px;font-size:14px;color:#666">0.00000</div>
<div class="t" style="left:1814.0px;top:728.0px;font-size:14.5px;color:#2e9a7c">Z</div>
<div class="t" style="right:329.5px;top:768.5px;font-size:14.6px;color:#666">Rotation</div>
<div class="a" style="left:1560.5px;top:760.5px;width:84px;height:31px;background:#fff;border:1px solid #dedede;border-radius:2px"></div>
<div class="t" style="left:1573.5px;top:769.5px;font-size:14px;color:#666">90</div>
<div class="t" style="left:1631.0px;top:769.0px;font-size:14.5px;color:#2e9a7c">X</div>
<div class="a" style="left:1652.5px;top:760.5px;width:84px;height:31px;background:#fff;border:1px solid #dedede;border-radius:2px"></div>
<div class="t" style="left:1665.5px;top:769.5px;font-size:14px;color:#666">0</div>
<div class="t" style="left:1723.0px;top:769.0px;font-size:14.5px;color:#2e9a7c">Y</div>
<div class="a" style="left:1743.5px;top:760.5px;width:84px;height:31px;background:#fff;border:1px solid #dedede;border-radius:2px"></div>
<div class="t" style="left:1756.5px;top:769.5px;font-size:14px;color:#666">0</div>
<div class="t" style="left:1814.0px;top:769.0px;font-size:14.5px;color:#2e9a7c">Z</div>
<div class="t" style="right:329.5px;top:809.5px;font-size:14.6px;color:#666">Scale</div>
<div class="a" style="left:1560.5px;top:801.5px;width:84px;height:31px;background:#fff;border:1px solid #dedede;border-radius:2px"></div>
<div class="t" style="left:1573.5px;top:810.5px;font-size:14px;color:#666">1</div>
<div class="t" style="left:1631.0px;top:810.0px;font-size:14.5px;color:#2e9a7c">X</div>
<div class="a" style="left:1652.5px;top:801.5px;width:84px;height:31px;background:#fff;border:1px solid #dedede;border-radius:2px"></div>
<div class="t" style="left:1665.5px;top:810.5px;font-size:14px;color:#666">1</div>
<div class="t" style="left:1723.0px;top:810.0px;font-size:14.5px;color:#2e9a7c">Y</div>
<div class="a" style="left:1743.5px;top:801.5px;width:84px;height:31px;background:#fff;border:1px solid #dedede;border-radius:2px"></div>
<div class="t" style="left:1756.5px;top:810.5px;font-size:14px;color:#666">1</div>
<div class="t" style="left:1814.0px;top:810.0px;font-size:14.5px;color:#2e9a7c">Z</div>
<div class="t" style="right:329.5px;top:850.5px;font-size:14.6px;color:#666">Shear</div>
<div class="a" style="left:1560.5px;top:842.5px;width:84px;height:31px;background:#fff;border:1px solid #dedede;border-radius:2px"></div>
<div class="t" style="left:1573.5px;top:851.5px;font-size:14px;color:#666">0</div>
<div class="t" style="left:1631.0px;top:851.0px;font-size:14.5px;color:#2e9a7c">X</div>
<div class="a" style="left:1652.5px;top:842.5px;width:84px;height:31px;background:#fff;border:1px solid #dedede;border-radius:2px"></div>
<div class="t" style="left:1665.5px;top:851.5px;font-size:14px;color:#666">0</div>
<div class="t" style="left:1723.0px;top:851.0px;font-size:14.5px;color:#2e9a7c">Y</div>
<div class="a" style="left:1743.5px;top:842.5px;width:84px;height:31px;background:#fff;border:1px solid #dedede;border-radius:2px"></div>
<div class="t" style="left:1756.5px;top:851.5px;font-size:14px;color:#666">0</div>
<div class="t" style="left:1814.0px;top:851.0px;font-size:14.5px;color:#2e9a7c">Z</div>
</div></div>
<div class="a" style="left:1860px;top:206px;width:19px;height:651px;background:#f1f2f4"></div>
<div class="a" style="left:1863px;top:221px;width:13px;height:295.5px;background:#c1c1c1"></div>
<svg style="left:1862px;top:208px" width="16" height="10" viewBox="0 0 16 10"><path d="M4 7 L8 3 L12 7 Z" fill="#a3a3a3"/></svg>
<svg style="left:1862px;top:843px" width="16" height="10" viewBox="0 0 16 10"><path d="M4 3 L8 7 L12 3 Z" fill="#505050"/></svg>
<!-- bottom bar -->
<div class="a" style="left:97px;top:878px;width:1786px;height:48px;background:#f0f2f5;border-top:1px solid #c6c6c6"></div>
<svg style="left:110px;top:888px" width="28" height="28" viewBox="0 0 28 28"><circle cx="14" cy="14" r="11.2" fill="#505050"/><path d="M8.8 16.6 L14 11.4 L19.2 16.6" fill="none" stroke="#fff" stroke-width="2.6"/></svg>
<div class="a" style="left:149px;top:923.5px;width:136px;height:2.5px;background:#1f9e7e"></div>

<div class="t" style="left:37.60px;top:37.48px;font-size:10.73px;color:#fff;-webkit-text-stroke:0.25px #fff;transform:scaleX(1.007);transform-origin:0 0">Dev</div>
<div class="t" style="left:23.60px;top:96.46px;font-size:14.03px;color:#fff;-webkit-text-stroke:0.25px #fff">Catalog</div>
<div class="t" style="left:27.30px;top:165.14px;font-size:13.48px;color:#fff;-webkit-text-stroke:0.25px #fff;transform:scaleX(1.009);transform-origin:0 0">Assets</div>
<div class="t" style="left:26.50px;top:232.50px;font-size:13.76px;color:#fff;-webkit-text-stroke:0.25px #fff;transform:scaleX(0.979);transform-origin:0 0">Stages</div>
<div class="t" style="left:21.00px;top:300.26px;font-size:14.03px;color:#fff;-webkit-text-stroke:0.25px #fff">Renders</div>
<div class="t" style="left:24.80px;top:367.99px;font-size:14.42px;color:#fff;-webkit-text-stroke:0.25px #fff;transform:scaleX(1.031);transform-origin:0 0">Orders</div>
<div class="t" style="left:31.00px;top:436.41px;font-size:14.31px;color:#fff;-webkit-text-stroke:0.25px #fff;transform:scaleX(1.012);transform-origin:0 0">Apps</div>
<div class="t" style="left:18.40px;top:502.88px;font-size:15.13px;color:#fff;-webkit-text-stroke:0.25px #fff;transform:scaleX(0.964);transform-origin:0 0">Analytics</div>
<div class="t" style="left:21.60px;top:601.67px;font-size:15.82px;color:#fff;-webkit-text-stroke:0.25px #fff;transform:scaleX(0.910);transform-origin:0 0">Settings</div>
<div class="t" style="left:133.00px;top:16.76px;font-size:16.51px;color:#2e8b7a;transform:scaleX(0.949);transform-origin:0 0">Assets</div>
<div class="t" style="left:202.00px;top:16.76px;font-size:16.51px;color:#2e8b7a;transform:scaleX(1.007);transform-origin:0 0">Connectors</div>
<div class="t" style="left:309.00px;top:16.76px;font-size:16.51px;color:#2e8b7a;transform:scaleX(0.936);transform-origin:0 0">ChessSet</div>
<div class="t" style="left:398.00px;top:16.76px;font-size:16.51px;color:#666;transform:scaleX(0.936);transform-origin:0 0">Black_Pawn</div>
<div class="t" style="left:1653.00px;top:18.63px;font-size:14.17px;color:#666;transform:scaleX(0.969);transform-origin:0 0">AndreiSE</div>
<div class="t" style="left:153.40px;top:69.99px;font-size:14.44px;color:#333;transform:scaleX(0.910);transform-origin:0 0">LAYOUT</div>
<div class="t" style="left:319.00px;top:69.99px;font-size:14.44px;color:#333;transform:scaleX(0.890);transform-origin:0 0">LOGIC</div>
<div class="t" style="left:629.00px;top:115.77px;font-size:14.58px;color:#666;transform:scaleX(0.918);transform-origin:0 0">Local</div>
<div class="t" style="left:1615.00px;top:116.50px;font-size:13.76px;color:#999;transform:scaleX(0.949);transform-origin:0 0">All changes saved</div>
<div class="t" style="left:1733.80px;top:116.30px;font-size:13.76px;color:#2e9a7c;transform:scaleX(0.882);transform-origin:0 0">AUTOSAVE</div>
<div class="t" style="left:122.70px;top:160.10px;font-size:16.23px;color:#333;transform:scaleX(0.993);transform-origin:0 0">Nodes</div>
<div class="t" style="left:149.40px;top:241.79px;font-size:14.44px;color:#b3b3b3;transform:scaleX(0.951);transform-origin:0 0">Search</div>
<div class="t" style="left:163.80px;top:274.99px;font-size:14.44px;color:#333;transform:scaleX(0.937);transform-origin:0 0">Black_Pawn</div>
<div class="t" style="left:195.50px;top:307.36px;font-size:14.03px;color:#333;transform:scaleX(0.970);transform-origin:0 0">Black_Pawn</div>
<div class="t" style="left:195.50px;top:338.89px;font-size:14.44px;color:#333;transform:scaleX(1.005);transform-origin:0 0">Connector</div>
<div class="t" style="left:619.00px;top:168.11px;font-size:13.07px;color:#555;transform:scaleX(0.934);transform-origin:0 0">Perspective Camera</div>
<div class="t" style="left:753.60px;top:165.39px;font-size:14.46px;color:#333;transform:scaleX(1.031);transform-origin:0 0">Output:</div>
<div class="t" style="left:822.00px;top:168.11px;font-size:13.07px;color:#666;transform:scaleX(0.901);transform-origin:0 0">WebGL</div>
<div class="t" style="left:1427.50px;top:160.25px;font-size:17.19px;color:#333;transform:scaleX(0.972);transform-origin:0 0">Properties</div>
<div class="t" style="left:1394.70px;top:214.95px;font-size:20.91px;color:#111;font-weight:bold;transform:scaleX(0.919);transform-origin:0 0">Connector</div>
<div class="t" style="left:1398.70px;top:263.99px;font-size:15.68px;color:#666;transform:scaleX(0.870);transform-origin:0 0">Tags</div>
<div class="t" style="left:1448.90px;top:264.96px;font-size:12.10px;color:#555;transform:scaleX(1.009);transform-origin:0 0">PieceConnector</div>
<div class="t" style="left:1432.70px;top:324.69px;font-size:16.92px;color:#333;-webkit-text-stroke:0.5px #333;transform:scaleX(0.990);transform-origin:0 0">Connector</div>
<div class="t" style="left:1463.60px;top:387.05px;font-size:15.96px;color:#555;transform:scaleX(0.915);transform-origin:0 0">Connector</div>
<div class="t" style="left:1482.60px;top:445.04px;font-size:15.41px;color:#666;transform:scaleX(0.941);transform-origin:0 0">Connect to</div>
<div class="t" style="left:1573.40px;top:447.53px;font-size:12.34px;color:#555;transform:scaleX(1.031);transform-origin:0 0">#BoardConnector</div>
<div class="t" style="left:1461.00px;top:482.13px;font-size:16.09px;color:#666;transform:scaleX(0.891);transform-origin:0 0">Match all axes</div>
<div class="t" style="left:1421.50px;top:528.13px;font-size:16.09px;color:#666;transform:scaleX(0.889);transform-origin:0 0">Max Snapping Angle</div>
<div class="t" style="left:1574.00px;top:528.89px;font-size:14.44px;color:#555;transform:scaleX(0.909);transform-origin:0 0">30</div>
<div class="t" style="left:1432.60px;top:605.57px;font-size:16.46px;color:#333;-webkit-text-stroke:0.5px #333;transform:scaleX(1.031);transform-origin:0 0">Transform</div>
<div class="t" style="left:1740.00px;top:606.27px;font-size:15.82px;color:#777;transform:scaleX(0.932);transform-origin:0 0">Add Operator</div>
<div class="t" style="left:1463.50px;top:668.48px;font-size:16.37px;color:#555;transform:scaleX(0.912);transform-origin:0 0">Transform</div>
<div class="t" style="left:193.00px;top:893.49px;font-size:15.68px;color:#2e9a7c;transform:scaleX(1.012);transform-origin:0 0">Assets</div>
<div class="t" style="left:331.70px;top:892.73px;font-size:16.06px;color:#666;transform:scaleX(1.031);transform-origin:0 0">Alerts</div>
</body></html>
